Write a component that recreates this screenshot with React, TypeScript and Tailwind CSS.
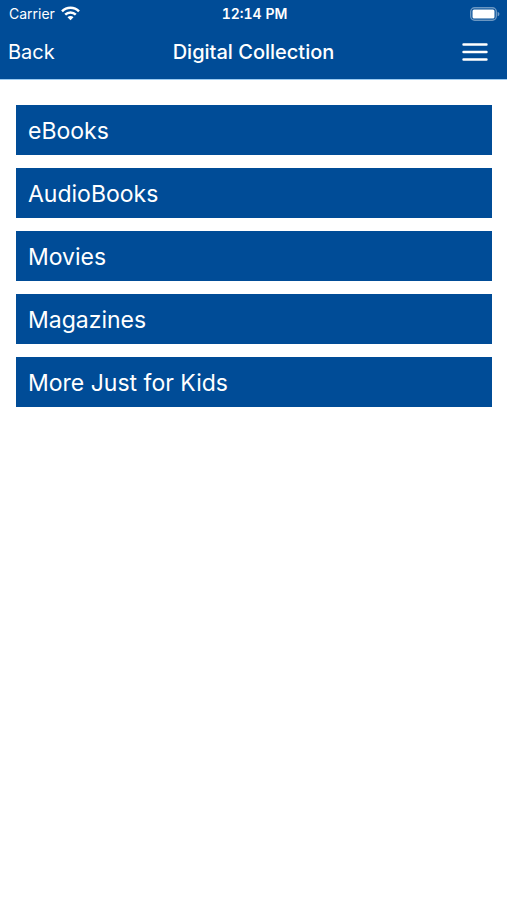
const items = ["eBooks", "AudioBooks", "Movies", "Magazines", "More Just for Kids"];

function WifiIcon() {
  return (
    <svg width="19" height="15" viewBox="0 0 19 15" fill="none" stroke="currentColor" strokeWidth="2.5" aria-hidden="true">
      <path d="M1 5.3a12 12 0 0 1 17 0" />
      <path d="M4.2 8.6a7.5 7.5 0 0 1 10.6 0" />
      <path d="M9.5 14.2 6.500 11.200a4.200 4.200 0 0 1 6 0Z" fill="currentColor" stroke="none" />
    </svg>
  );
}

function BatteryIcon() {
  return (
    <svg width="30" height="14" viewBox="0 0 30 14" fill="none" aria-hidden="true">
      <rect x="0.7" y="0.7" width="25.6" height="12.6" rx="4" stroke="#fff" strokeOpacity="0.42" strokeWidth="1.4" />
      <rect x="2.5" y="2.5" width="22" height="9" rx="1.5" fill="#fff" />
      <path d="M27.6 4.7c2.4.8 2.4 3.8 0 4.6Z" fill="#fff" fillOpacity="0.45" />
    </svg>
  );
}

export default function App() {
  return (
    <div className="min-h-screen bg-white font-['Inter',sans-serif] text-white">
      <header className="border-b border-[#9ccbf2] bg-[#004c97]">
        <div className="grid h-7 grid-cols-[1fr_auto_1fr] items-center pr-[7px] pb-px pl-[9px]">
          <div className="flex items-center gap-1.5 text-sm">
            <span>Carrier</span>
            <WifiIcon />
          </div>
          <span className="text-sm font-semibold tabular-nums">12:14 PM</span>
          <div className="flex justify-end">
            <BatteryIcon />
          </div>
        </div>
        <nav className="grid h-[51px] grid-cols-[1fr_auto_1fr] items-center px-2 pb-1">
          <button type="button" className="justify-self-start text-xl">Back</button>
          <h1 className="text-xl font-medium">Digital Collection</h1>
          <button type="button" aria-label="Menu" className="justify-self-end pr-2">
            <svg width="32" height="24" viewBox="0 0 32 24" stroke="#fff" strokeWidth="2.4" strokeLinecap="round" aria-hidden="true">
              <path d="M4.5 4.5h23M4.5 12h23M4.5 19.5h23" />
            </svg>
          </button>
        </nav>
      </header>
      <main className="flex flex-col gap-[13px] pt-[25px] pr-[15px] pl-4">
        {items.map((item) => (
          <button key={item} type="button" className="h-[50px] bg-[#004c97] px-3 pt-0.5 text-left text-[23px]">
            {item}
          </button>
        ))}
      </main>
    </div>
  );
}
